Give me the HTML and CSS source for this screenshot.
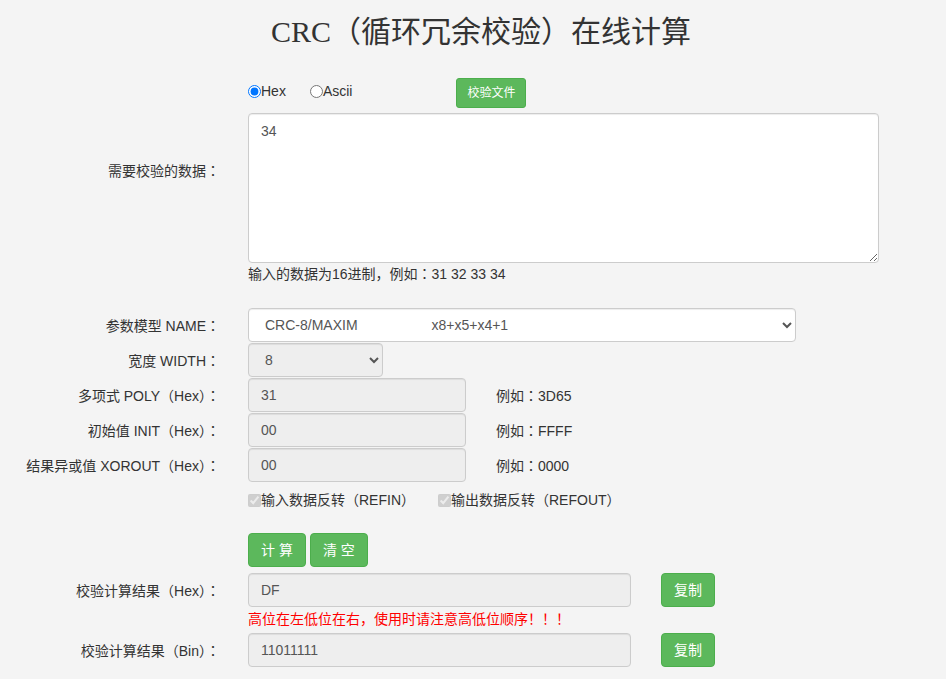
FILE: index.html
```html
<!DOCTYPE html>
<html lang="zh-CN">
<head>
<meta charset="utf-8">
<title>CRC在线计算</title>
<link rel="stylesheet" href="styles.css">
</head>
<body>
<h1 class="title">CRC（循环冗余校验）在线计算</h1>
<div class="form">
  <div class="row row-radio">
    <div class="label"></div>
    <div class="ctrl radios">
      <label class="radio"><input type="radio" name="fmt" checked>Hex</label>
      <label class="radio radio-ascii"><input type="radio" name="fmt">Ascii</label>
      <button class="btn btn-sm btn-file">校验文件</button>
    </div>
  </div>
  <div class="row row-data">
    <div class="label label-data">需要校验的数据<span class="colon" lang="ja">：</span></div>
    <div class="ctrl">
      <textarea class="textarea">34</textarea>
      <div class="hint">输入的数据为16进制，例如<span class="colon" lang="ja">：</span>31 32 33 34</div>
    </div>
  </div>
  <div class="row row-field row-name">
    <div class="label">参数模型 NAME<span class="colon" lang="ja">：</span></div>
    <div class="ctrl">
      <select class="select select-name">
        <option>CRC-8/MAXIM&nbsp;&nbsp;&nbsp;&nbsp;&nbsp;&nbsp;&nbsp;&nbsp;&nbsp;&nbsp;&nbsp;&nbsp;&nbsp;&nbsp;&nbsp;&nbsp;&nbsp;&nbsp;&nbsp;x8+x5+x4+1</option>
      </select>
    </div>
  </div>
  <div class="row row-field">
    <div class="label">宽度 WIDTH<span class="colon" lang="ja">：</span></div>
    <div class="ctrl">
      <select class="select select-width" disabled>
        <option>8</option>
      </select>
    </div>
  </div>
  <div class="row row-field">
    <div class="label">多项式 POLY（Hex）<span class="colon" lang="ja">：</span></div>
    <div class="ctrl inline">
      <input class="input input-short" value="31" readonly>
      <span class="example">例如<span class="colon" lang="ja">：</span>3D65</span>
    </div>
  </div>
  <div class="row row-field">
    <div class="label">初始值 INIT（Hex）<span class="colon" lang="ja">：</span></div>
    <div class="ctrl inline">
      <input class="input input-short" value="00" readonly>
      <span class="example">例如<span class="colon" lang="ja">：</span>FFFF</span>
    </div>
  </div>
  <div class="row row-field">
    <div class="label">结果异或值 XOROUT（Hex）<span class="colon" lang="ja">：</span></div>
    <div class="ctrl inline">
      <input class="input input-short" value="00" readonly>
      <span class="example">例如<span class="colon" lang="ja">：</span>0000</span>
    </div>
  </div>
  <div class="row row-check">
    <div class="label"></div>
    <div class="ctrl inline">
      <label class="check"><input type="checkbox" checked disabled>输入数据反转（REFIN）</label>
      <label class="check check-out"><input type="checkbox" checked disabled>输出数据反转（REFOUT）</label>
    </div>
  </div>
  <div class="row row-buttons">
    <div class="label"></div>
    <div class="ctrl inline gap4">
      <button class="btn">计 算</button>
      <button class="btn">清 空</button>
    </div>
  </div>
  <div class="row row-field row-hex">
    <div class="label">校验计算结果（Hex）<span class="colon" lang="ja">：</span></div>
    <div class="ctrl inline">
      <input class="input input-result" value="DF" readonly>
      <button class="btn btn-copy">复制</button>
    </div>
  </div>
  <div class="row row-warn">
    <div class="label"></div>
    <div class="ctrl warn">高位在左低位在右，使用时请注意高低位顺序！！！</div>
  </div>
  <div class="row row-field">
    <div class="label">校验计算结果（Bin）<span class="colon" lang="ja">：</span></div>
    <div class="ctrl inline">
      <input class="input input-result" value="11011111" readonly>
      <button class="btn btn-copy">复制</button>
    </div>
  </div>
</div>
</body>
</html>
```
FILE: styles.css
```css
* { box-sizing: border-box; }
html, body {
  margin: 0;
  padding: 0;
  background: #f4f4f4;
}
body {
  font-family: "Liberation Sans", "Noto Sans CJK SC", sans-serif;
  font-size: 14px;
  line-height: 20px;
  color: #333;
  width: 946px;
  height: 679px;
  overflow: hidden;
}
.colon { font-family: "Noto Sans CJK JP", sans-serif; }
.title {
  margin: 0;
  padding-top: 12px;
  height: 66px;
  text-align: center;
  font-family: "Liberation Serif", "Noto Sans CJK SC", serif;
  font-weight: normal;
  font-size: 30px;
  line-height: 40px;
  color: #333;
  padding-left: 16px;
}
.form { display: flex; flex-direction: column; }
.row {
  display: grid;
  grid-template-columns: 248px 1fr;
  align-items: center;
}
.label {
  text-align: right;
  padding-right: 28px;
  white-space: nowrap;
}
.ctrl { min-width: 0; }
.inline { display: flex; align-items: center; }
.gap4 { gap: 4px; }

.row-radio { margin-top: 12px; height: 30px; }
.radios { display: flex; align-items: flex-start; }
.radio { display: flex; align-items: center; cursor: pointer; margin-top: 3px; }
.radio input { margin: 0; width: 13px; height: 13px; }
.radio-ascii { margin-left: 24px; }
.btn-file { margin-left: 104px; }

.row-data { margin-top: 5px; align-items: start; }
.label-data { padding-top: 47px; }
.textarea {
  display: block;
  width: 631px;
  height: 150px;
  padding: 7px 12px;
  border: 1px solid #ccc;
  border-radius: 4px;
  background: #fff;
  font-family: "Liberation Sans", "Noto Sans CJK SC", sans-serif;
  font-size: 14px;
  line-height: 20px;
  color: #555;
  resize: vertical;
  box-shadow: inset 0 1px 1px rgba(0,0,0,.075);
}
.hint { height: 20px; margin-top: 0; }

.row-field { height: 34px; margin-bottom: 1px; }
.row-name { margin-top: 25px; margin-bottom: 1px; }
.select {
  height: 34px;
  padding: 6px 12px;
  border: 1px solid #ccc;
  border-radius: 4px;
  background: #fff;
  font-family: "Liberation Sans", "Noto Sans CJK SC", sans-serif;
  font-size: 14px;
  color: #555;
  box-shadow: inset 0 1px 1px rgba(0,0,0,.075);
}
.select-name { width: 548px; }
.select-width { width: 135px; background: #eee; color: #555; opacity: 1; }
.input {
  height: 34px;
  padding: 6px 12px;
  border: 1px solid #ccc;
  border-radius: 4px;
  background: #eee;
  font-family: "Liberation Sans", "Noto Sans CJK SC", sans-serif;
  font-size: 14px;
  color: #555;
  box-shadow: inset 0 1px 1px rgba(0,0,0,.075);
  outline: none;
}
.input-short { width: 218px; }
.input-result { width: 383px; }
.example { margin-left: 30px; }

.row-check { height: 34px; }
.check { display: flex; align-items: center; }
.check input { margin: 0; width: 13px; height: 13px; }
.check-out { margin-left: 23px; }

.row-buttons { margin-top: 16px; height: 34px; }
.btn {
  height: 34px;
  padding: 6px 12px;
  border: 1px solid #4cae4c;
  border-radius: 4px;
  background: #5cb85c;
  color: #fff;
  font-family: "Liberation Sans", "Noto Sans CJK SC", sans-serif;
  font-size: 14px;
  line-height: 20px;
  cursor: pointer;
}
.btn-sm {
  height: 30px;
  padding: 5px 10px;
  font-size: 12px;
  line-height: 18px;
  border-radius: 3px;
}
.btn-copy { margin-left: 30px; }
.row-hex { margin-top: 6px; margin-bottom: 0; }
.row-warn { height: 26px; align-items: start; }
.warn { color: #f00; padding-top: 2px; }
```
